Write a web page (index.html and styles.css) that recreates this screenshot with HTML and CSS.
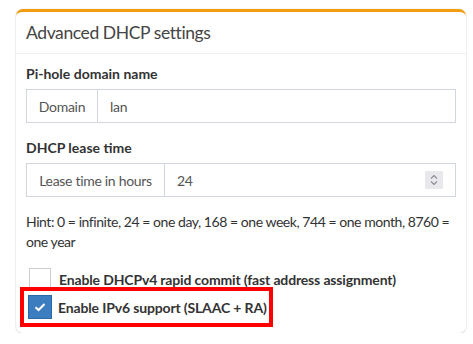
FILE: index.html
```html
<!DOCTYPE html>
<html>
<head>
<meta charset="utf-8">
<link rel="stylesheet" href="styles.css">
</head>
<body>
<div class="box">
  <div class="box-header"><h3 class="box-title">Advanced DHCP settings</h3></div>
  <div class="box-body">
    <div class="form-group">
      <label class="field-label">Pi-hole domain name</label>
      <div class="input-group">
        <span class="addon addon-domain">Domain</span>
        <span class="control">lan</span>
      </div>
    </div>
    <div class="form-group">
      <label class="field-label">DHCP lease time</label>
      <div class="input-group">
        <span class="addon addon-lease">Lease time in hours</span>
        <span class="control">24
          <span class="spinner">
            <svg width="10" height="14" viewBox="0 0 10 14"><path d="M2 5.5 L5 2.5 L8 5.5 M2 8.5 L5 11.5 L8 8.5" fill="none" stroke="#8a8a94" stroke-width="1.1"/></svg>
          </span>
        </span>
      </div>
    </div>
    <p class="hint">Hint: 0 = infinite, 24 = one day, 168 = one week, 744 = one month, 8760 = one year</p>
    <div class="checks">
      <div class="check-row">
        <span class="cb"></span>
        <span class="check-label">Enable DHCPv4 rapid commit (fast address assignment)</span>
      </div>
      <div class="check-row highlighted">
        <span class="cb checked">
          <svg width="14" height="12" viewBox="0 0 14 12"><path d="M2.5 6.2 L5.6 9 L11.5 3" fill="none" stroke="#fff" stroke-width="2"/></svg>
        </span>
        <span class="check-label">Enable IPv6 support (SLAAC + RA)</span>
      </div>
    </div>
  </div>
</div>
</body>
</html>
```
FILE: styles.css
```css
html, body {
  margin: 0;
  padding: 0;
  background: #fff;
}
body {
  font-family: Lato, "Liberation Sans", sans-serif;
  color: #333;
  font-size: 14px;
  padding: 9px 7px 0 16px;
}
.box {
  width: 450px;
  box-sizing: border-box;
  border-top: 3px solid #f39c12;
  border-radius: 7px;
  background: #fff;
  box-shadow: 0 1px 2px rgba(0,0,0,0.12), 0 0 0 1px rgba(0,0,0,0.03);
  height: 324px;
}
.box-header {
  padding: 10px;
  border-bottom: 1px solid #f0f0f0;
}
.box-title {
  margin: 0;
  font-size: 17.5px;
  letter-spacing: -0.4px;
  line-height: 21px;
  font-weight: 400;
  color: #444;
}
.box-body {
  padding: 10px;
}
.form-group {
  margin-bottom: 15px;
}
.field-label {
  display: block;
  font-weight: 700;
  line-height: 20px;
  margin-bottom: 5px;
  color: #333;
}
.input-group {
  display: flex;
  height: 34px;
  box-sizing: border-box;
  border: 1px solid #d2d6de;
  width: 430px;
  letter-spacing: -0.3px;
}
.addon {
  display: flex;
  align-items: center;
  justify-content: center;
  color: #555;
  border-right: 1px solid #d2d6de;
  box-sizing: border-box;
}
.addon-domain { width: 71px; }
.addon-lease { width: 138px; }
.control {
  flex: 1;
  display: flex;
  align-items: center;
  padding-left: 12px;
  color: #555;
  position: relative;
}
.spinner {
  position: absolute;
  right: 12px;
  top: 7px;
  width: 18px;
  height: 18px;
  background: #e9e9ed;
  display: flex;
  align-items: center;
  justify-content: center;
}
.hint {
  margin: 0;
  line-height: 20px;
  color: #333;
  letter-spacing: -0.45px;
}
.checks {
  margin-top: 13px;
  display: flex;
  flex-direction: column;
  align-items: flex-start;
}
.check-row {
  display: inline-flex;
  align-items: center;
  height: 28px;
}
.check-row .cb {
  width: 20px;
  height: 20px;
  border: 1px solid #ccc;
  background: #fff;
  margin-left: 3px;
  margin-right: 8px;
  display: flex;
  align-items: center;
  justify-content: center;
}
.check-row .cb.checked {
  width: 22px;
  height: 22px;
  background: #3c7dc0;
  border-color: #2e6aa8;
  margin-left: 2px;
  margin-right: 6px;
}
.check-label {
  font-weight: 700;
  color: #333;
  letter-spacing: -0.15px;
}
.highlighted {
  outline: 4px solid #f00;
  outline-offset: 2px;
  padding-right: 0;
}
```
